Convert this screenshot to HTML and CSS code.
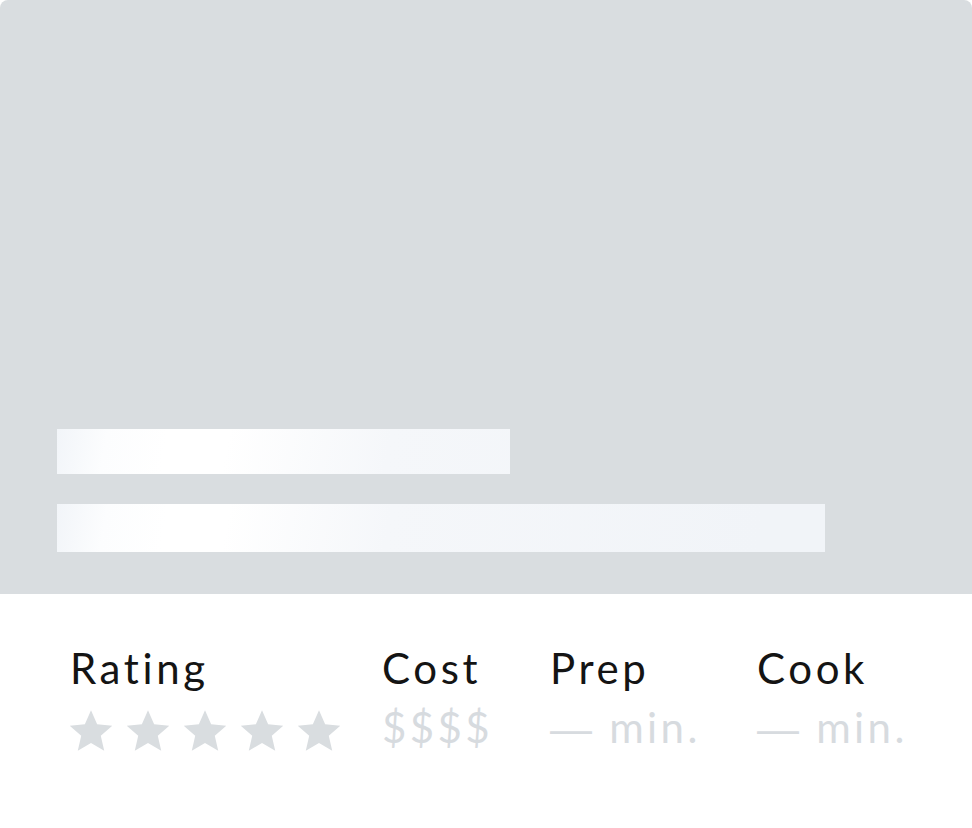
FILE: index.html
```html
<!DOCTYPE html>
<html>
<head>
<meta charset="utf-8">
<link rel="stylesheet" href="styles.css">
</head>
<body>
<div class="card">
  <div class="hero">
    <div class="bar bar-short"></div>
    <div class="bar bar-long"></div>
  </div>
  <div class="stats">
    <div class="stat stat-rating">
      <div class="label">Rating</div>
      <div class="stars">
        <svg class="star" viewBox="0 0 24 24"><path d="M12 1.2l3.2 7.3 7.9.7-6 5.3 1.8 7.8L12 18.2l-6.9 4.1 1.8-7.8-6-5.3 7.9-.7z"/></svg>
        <svg class="star" viewBox="0 0 24 24"><path d="M12 1.2l3.2 7.3 7.9.7-6 5.3 1.8 7.8L12 18.2l-6.9 4.1 1.8-7.8-6-5.3 7.9-.7z"/></svg>
        <svg class="star" viewBox="0 0 24 24"><path d="M12 1.2l3.2 7.3 7.9.7-6 5.3 1.8 7.8L12 18.2l-6.9 4.1 1.8-7.8-6-5.3 7.9-.7z"/></svg>
        <svg class="star" viewBox="0 0 24 24"><path d="M12 1.2l3.2 7.3 7.9.7-6 5.3 1.8 7.8L12 18.2l-6.9 4.1 1.8-7.8-6-5.3 7.9-.7z"/></svg>
        <svg class="star" viewBox="0 0 24 24"><path d="M12 1.2l3.2 7.3 7.9.7-6 5.3 1.8 7.8L12 18.2l-6.9 4.1 1.8-7.8-6-5.3 7.9-.7z"/></svg>
      </div>
    </div>
    <div class="stat stat-cost">
      <div class="label">Cost</div>
      <div class="value">$$$$</div>
    </div>
    <div class="stat stat-prep">
      <div class="label">Prep</div>
      <div class="value"><span class="dash">—</span> min.</div>
    </div>
    <div class="stat stat-cook">
      <div class="label">Cook</div>
      <div class="value"><span class="dash">—</span> min.</div>
    </div>
  </div>
</div>
</body>
</html>
```
FILE: styles.css
```css
html, body {
  margin: 0;
  padding: 0;
  background: #ffffff;
}
body {
  font-family: Lato, "Noto Sans", sans-serif;
}
.card {
  width: 972px;
}
.hero {
  height: 594px;
  box-sizing: border-box;
  background: #d9dde0;
  border-radius: 8px 8px 0 0;
  display: flex;
  flex-direction: column;
  justify-content: flex-end;
  padding: 0 0 42px 57px;
  gap: 30px;
}
.bar {
  background: linear-gradient(100deg, #f2f5f9 0px, #fcfdfe 50px, #ffffff 110px, #ffffff 170px, #f5f7fa 330px, #f1f4f8 700px);
}
.bar-short {
  width: 453px;
  height: 45px;
}
.bar-long {
  width: 768px;
  height: 48px;
}
.stats {
  display: flex;
  padding: 50px 0 0 70px;
}
.stat {
  display: flex;
  flex-direction: column;
}
.stat-rating { width: 312px; }
.stat-cost { width: 168px; }
.stat-prep { width: 207px; }
.label {
  font-size: 42px;
  line-height: 48px;
  letter-spacing: 3.6px;
  color: #141414;
}
.value {
  font-size: 42px;
  line-height: 48px;
  letter-spacing: 3.4px;
  color: #d7dbdf;
  margin-top: 11px;
}
.dash {
  font-family: "Liberation Sans", sans-serif;
  font-size: 42px;
  letter-spacing: 0;
  margin-right: 3px;
}
.stars {
  display: flex;
  gap: 11px;
  margin-top: 16px;
  margin-left: -2px;
}
.star {
  width: 46px;
  height: 46px;
  fill: #d9dde0;
}
```
